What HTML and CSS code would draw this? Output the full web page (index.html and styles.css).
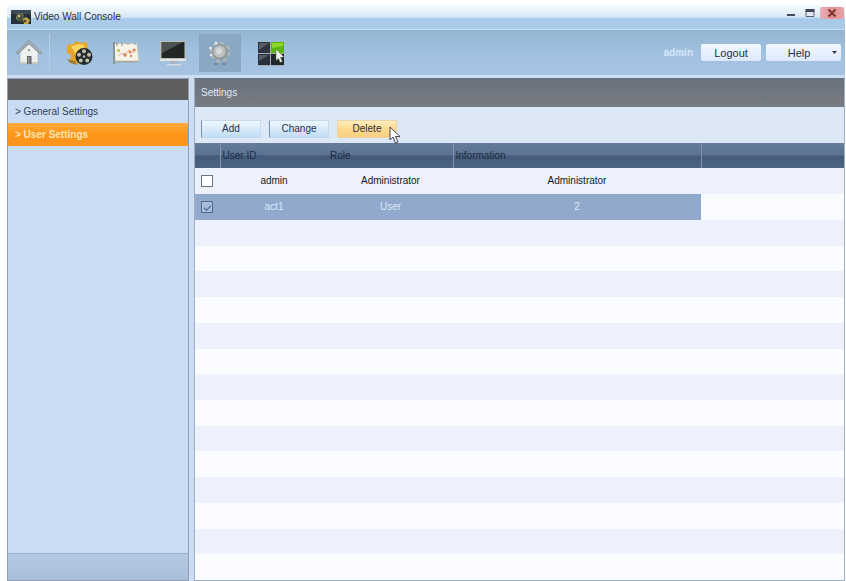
FILE: index.html
```html
<!DOCTYPE html>
<html lang="en">
<head>
<meta charset="utf-8">
<title>Video Wall Console</title>
<link rel="stylesheet" href="styles.css">
</head>
<body>
<div class="window">
  <header class="titlebar">
    <svg class="app-icon" width="20" height="14" viewBox="0 0 20 14" aria-hidden="true">
      <rect width="20" height="14" fill="#253038"/>
      <path d="M0 0h20v4H0z" fill="#3a4b55"/>
      <circle cx="9" cy="7" r="4" fill="#82846c"/>
      <path d="M5 5l4-2 4 3-1 5-4 1z" fill="#4d523f"/>
      <circle cx="8" cy="6" r="1.3" fill="#d0c58e"/>
      <path d="M12 9l3-2 4 3-2 4h-4z" fill="#c2a446"/>
      <circle cx="14" cy="11" r="1.3" fill="#4b452a"/>
    </svg>
    <h1 class="title">Video Wall Console</h1>
    <div class="window-controls">
      <button class="control" type="button" aria-label="Minimize"><svg width="10" height="10" viewBox="0 0 10 10"><path d="M1 6h8v2H1z" fill="#414a5b"/></svg></button>
      <button class="control" type="button" aria-label="Maximize"><svg width="10" height="10" viewBox="0 0 10 10"><path d="M1 2.5h8v6H1z" fill="#e4eaf4" stroke="#596273"/><path d="M.5 1h9v3h-9z" fill="#414a5b"/></svg></button>
      <button class="control close" type="button" aria-label="Close"><svg width="10" height="10" viewBox="0 0 10 10"><path d="M1.5 1.5l7 7m0-7l-7 7" stroke="#7d3430" stroke-width="2"/></svg></button>
    </div>
  </header>

  <nav class="toolbar" aria-label="Main">
    <button class="tool home" type="button" aria-label="Home">
      <svg width="30" height="30" viewBox="0 0 30 30">
        <path d="M6 14l9-8 9 8v12H6z" fill="#eef0f0" stroke="#a5aaac" stroke-width=".6"/>
        <path d="M6 24h18v2H6z" fill="#c9c8bd"/>
        <path d="M2.500 15.500L15 4l12.500 11.500" fill="none" stroke="#8b979f" stroke-width="3"/>
        <path d="M3 14.500L15 4l12 10.500" fill="none" stroke="#b9c3c9" stroke-width="1"/>
        <path d="M13 18h4.500v8H13z" fill="#62666a"/>
        <path d="M14 19h1.500v7H14z" fill="#9a9c9a"/>
        <circle cx="15" cy="12" r="1.300" fill="#9da5aa"/>
      </svg>
    </button>
    <button class="tool" type="button" aria-label="Media">
      <svg width="30" height="30" viewBox="0 0 30 30">
        <path d="M3 7l6-1 3-3 4 2 7-1 1 7-3 12-9 3-6-3 1-6-4-2z" fill="#e5a526"/>
        <path d="M7 8l8-2 6 1-3 6-7 2z" fill="#f9d45e"/>
        <path d="M3 21l8 2 2 4-7-2z" fill="#a77a35"/>
        <circle cx="20" cy="18.500" r="8.500" fill="#252a2e"/>
        <g fill="#c0c0a8">
          <circle cx="20" cy="13.200" r="2"/><circle cx="25" cy="16.700" r="2"/><circle cx="23.200" cy="22.600" r="2"/><circle cx="16.800" cy="22.600" r="2"/><circle cx="15" cy="16.700" r="2"/><circle cx="20" cy="18.500" r="1.200"/>
        </g>
      </svg>
    </button>
    <button class="tool" type="button" aria-label="Layout">
      <svg width="30" height="30" viewBox="0 0 30 30">
        <path d="M3 5.500h23l2 17.500H4z" fill="#f5f2e6" stroke="#b5b5a9" stroke-width=".6"/>
        <path d="M3 4v22" stroke="#7e8782" stroke-width="1.500"/>
        <path d="M4 23h24v1.500H4z" fill="#a5a899"/>
        <path d="M6 5v3M11 4v4M17 5v2M24 4v3" stroke="#98a591" stroke-width="1.200"/>
        <path d="M6 11h3v3H6z" fill="#c6c979"/>
        <path d="M7 18l4-3 3 2 4-5 4 3 3-4" fill="none" stroke="#d9b9a0"/>
        <g fill="#dd875e"><circle cx="14" cy="17" r="1.800"/><circle cx="19" cy="14" r="1.500"/><circle cx="23" cy="12" r="1.500"/><circle cx="20" cy="18" r="1.200"/></g>
      </svg>
    </button>
    <button class="tool display" type="button" aria-label="Display">
      <svg width="30" height="30" viewBox="0 0 30 30">
        <path d="M2 3h26v20H2z" fill="#bcc0bd"/>
        <path d="M3.500 4h23v16h-23z" fill="#202726"/>
        <path d="M4 4h21L4 15z" fill="#4b5452"/>
        <path d="M2 21h26v2H2z" fill="#e5e6e1"/>
        <path d="M12 23h7v3h-7z" fill="#aab4bf"/>
        <path d="M9 26h14v1.500H9z" fill="#d3dbe5"/>
      </svg>
    </button>
    <button class="tool active" type="button" aria-label="Settings" aria-pressed="true">
      <svg width="30" height="30" viewBox="0 0 30 30">
        <circle cx="15" cy="14" r="8.500" fill="none" stroke="#b0b7bb" stroke-width="4" stroke-dasharray="3.600 3.075"/>
        <circle cx="15" cy="14" r="8" fill="#929b9f"/>
        <circle cx="14.500" cy="13.500" r="6" fill="#bdc1c2"/>
        <circle cx="14" cy="13" r="3" fill="#d8dada"/>
        <g fill="#e6e8e8"><circle cx="11" cy="5" r="1.500"/><circle cx="5.500" cy="10" r="1.500"/><circle cx="6" cy="17" r="1.300"/></g>
        <path d="M9 25h4v2H9zM17 25h4v2h-4z" fill="#7b8790"/>
      </svg>
    </button>
    <button class="tool" type="button" aria-label="Video wall">
      <svg width="30" height="30" viewBox="0 0 30 30">
        <path d="M2 4h26v24H2z" fill="#a5adb3"/>
        <path d="M2 4h12v11H2z" fill="#30343f"/><path d="M2 16h12v11H2z" fill="#293039"/>
        <path d="M15 16h13v11H15z" fill="#20272b"/><path d="M15 4h13v11H15z" fill="#5bb50e"/>
        <path d="M16 5h11v3l-11 2z" fill="#8ed62c"/>
        <path d="M3 5h10L3 12zM3 17h10L3 23z" fill="#555c69"/>
        <path d="M20 11l8 8-3.500.500 2 4-2.300 1-1.700-4-2.500 2z" fill="#eef3e9" stroke="#4b5b47" stroke-width=".5"/>
      </svg>
    </button>
    <div class="session">
      <span class="user">admin</span>
      <button class="session-button" type="button">Logout</button>
      <button class="session-button help" type="button"><span>Help</span><svg width="5" height="3" viewBox="0 0 5 3" aria-hidden="true"><path d="M0 0h5L2.500 3z" fill="#333b46"/></svg></button>
    </div>
  </nav>

  <div class="workspace">
    <aside class="sidebar">
      <div class="sidebar-head"></div>
      <a class="side-link" href="#general">&gt; General Settings</a>
      <a class="side-link selected" href="#users" aria-current="page">&gt; User Settings</a>
      <div class="sidebar-foot"></div>
    </aside>
    <main class="content">
      <h2 class="content-title">Settings</h2>
      <div class="actions">
        <button class="action" type="button">Add</button>
        <button class="action" type="button">Change</button>
        <button class="action hover" type="button">Delete
          <svg class="pointer" width="12" height="18" viewBox="0 0 12 18" aria-hidden="true"><path d="M1 1v13l3-3 2.500 6 2.500-1-2.500-5.500H11z" fill="#fff" stroke="#424552"/></svg>
        </button>
      </div>
      <table class="users">
        <colgroup><col class="col-check"><col class="col-id"><col class="col-role"><col class="col-info"><col></colgroup>
        <thead>
          <tr><th></th><th>User ID</th><th>Role</th><th>Information</th><th></th></tr>
        </thead>
        <tbody>
          <tr><td><input class="check" type="checkbox" aria-label="Select admin"></td><td>admin</td><td>Administrator</td><td>Administrator</td><td></td></tr>
          <tr class="picked"><td><input class="check" type="checkbox" aria-label="Select act1" checked></td><td>act1</td><td>User</td><td>2</td><td></td></tr>
        </tbody>
      </table>
      <div class="blank-rows" aria-hidden="true">
        <i></i><i></i><i></i><i></i><i></i><i></i><i></i><i></i><i></i><i></i><i></i><i></i><i></i><i></i>
      </div>
    </main>
  </div>
</div>
</body>
</html>
```
FILE: styles.css
```css
* { box-sizing: border-box; }

body {
  margin: 0;
  background: #fff;
  color: #273044;
  font-family: "Liberation Sans", Arial, sans-serif;
  font-size: 10px;
  line-height: 14px;
}

button {
  font: inherit;
  color: inherit;
  padding: 0;
  border: 0;
}

svg { display: block; }

.window {
  display: flex;
  flex-direction: column;
  min-height: 100vh;
  padding: 4px 1px 0 7px;
}

.titlebar {
  display: flex;
  align-items: center;
  height: 26px;
  padding: 0 1px 0 4px;
  background: linear-gradient(#fafdff, #d9e8f7 50%, #a9cae8 60%, #a9cbea);
  border-bottom: 1px solid #c6e0f4;
}

.title {
  flex: 1;
  margin: 0 0 0 3px;
  font-size: 10px;
  font-weight: normal;
}

.window-controls {
  display: flex;
  align-self: flex-start;
  gap: 1px;
  padding-top: 3px;
}

.control {
  display: grid;
  place-items: center;
  width: 18px;
  height: 12px;
  background: transparent;
}

.close {
  width: 24px;
  border-radius: 2px;
  background: linear-gradient(90deg, #e5b3bd, #e68e91 50%, #e5a5ab);
}

.toolbar {
  display: flex;
  align-items: center;
  height: 45px;
  padding: 0 4px 0 1px;
  background: linear-gradient(#94b4d1, #a1c1e1 50%, #a7c3e2);
}

.tool {
  display: grid;
  place-items: center;
  width: 42px;
  height: 38px;
  margin-right: 5px;
  background: transparent;
}

.home {
  margin-right: 8px;
  border-right: 1px solid #b6cee6;
}

.active { background: #89a8c3; }

.active + .tool { margin-left: 4px; }

.session {
  display: flex;
  align-items: center;
  gap: 5px;
  margin-left: auto;
}

.user {
  margin-right: 3px;
  color: #d5e6fb;
  font-weight: bold;
}

.session-button {
  width: 60px;
  height: 17px;
  border-radius: 2px;
  background: linear-gradient(#f3f8ff, #dce9fb);
  font-size: 11px;
}

.help {
  display: flex;
  align-items: center;
  width: 75px;
  padding-right: 4px;
}

.help span { flex: 1; }

.workspace {
  display: flex;
  flex: 1;
  gap: 5px;
  padding-top: 3px;
  background: #ccdcf2;
}

.sidebar {
  display: flex;
  flex-direction: column;
  width: 182px;
  border: 1px solid #8e9fb6;
  background: #c9dcf4;
}

.sidebar-head {
  height: 21px;
  background: #5e5e5e;
}

.side-link {
  height: 23px;
  padding: 5px 7px;
  color: #334055;
  text-decoration: none;
}

.selected {
  background: linear-gradient(#ffaa3c, #ff9518 50%, #fb951f);
  color: #ffe5b5;
  font-weight: bold;
}

.sidebar-foot {
  height: 27px;
  margin-top: auto;
  border-top: 1px solid #9db2cf;
  background: linear-gradient(#b6c9e2, #a9bfd9);
}

.content {
  display: flex;
  flex: 1;
  flex-direction: column;
  min-width: 0;
  border: 1px solid #9eafc3;
  border-top-color: #667382;
}

.content-title {
  height: 28px;
  margin: 0;
  padding: 7px 6px;
  background: linear-gradient(#6a727e, #777b83);
  color: #e3e8ef;
  font-size: 10px;
  font-weight: normal;
}

.actions {
  display: flex;
  gap: 8px;
  height: 36px;
  padding: 13px 6px 5px;
  background: #dce8f5;
}

.action {
  position: relative;
  width: 60px;
  border: 1px solid #c5daec;
  border-left-color: #7893ad;
  background: linear-gradient(#eef8ff, #d8ebfb 50%, #bfdcf5);
}

.hover {
  border-color: #edd4a5;
  background: linear-gradient(#ffedbf, #ffd98e 50%, #f9cf83);
}

.pointer {
  position: absolute;
  left: 51px;
  top: 5px;
}

.users {
  width: 100%;
  border-collapse: collapse;
  table-layout: fixed;
}

.col-check { width: 25px; }
.col-id { width: 108px; }
.col-role { width: 125px; }
.col-info { width: 248px; }

.users th {
  height: 25px;
  padding: 0 2px;
  background: linear-gradient(#657b99, #5b7293 46%, #465b7b 54%, #4c6381);
  color: #1d2a40;
  font-weight: normal;
  text-align: left;
}

.users th + th:not(:nth-child(3)) { border-left: 1px solid #8194ae; }

.users td {
  height: 26px;
  padding: 0;
  background: #edf1fb;
  color: #141925;
  text-align: center;
}

.users .picked td {
  background: #91a9cd;
  color: #dce8f8;
}

.users .picked td:last-child { background: #f9fbff; }

.users td:first-child { padding-left: 6px; }

.check {
  display: grid;
  place-items: center;
  appearance: none;
  width: 12px;
  height: 12px;
  margin: 0;
  border: 1px solid #697382;
  background: #fff;
}

.check:checked {
  border-color: #526b90;
  background: #a9bddb;
}

.check:checked::before {
  content: "";
  width: 6px;
  height: 3px;
  border: solid #4a6388;
  border-width: 0 0 1px 1px;
  transform: rotate(-45deg);
}

.blank-rows {
  display: flex;
  flex: 1;
  flex-direction: column;
}

.blank-rows i {
  flex: 1;
  background: #fafcff;
}

.blank-rows i:nth-child(odd) { background: #edf1fb; }
```
